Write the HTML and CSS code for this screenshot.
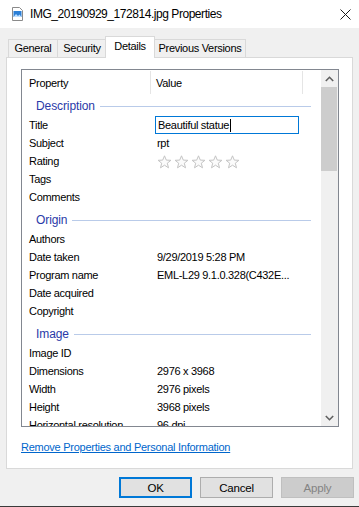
FILE: index.html
```html
<!DOCTYPE html>
<html>
<head>
<meta charset="utf-8">
<link rel="stylesheet" href="styles.css">
</head>
<body>
<div class="window">
  <div class="titlebar">
    <svg class="ficon" width="11" height="14" viewBox="0 0 11 14">
      <path d="M0.5 0.5 H7.5 L10.5 3.5 V13.5 H0.5 Z" fill="#fff" stroke="#8a8a8a"/>
      <rect x="1.5" y="4" width="8" height="6" fill="#2b7fd6"/>
      <path d="M1.5 10 L4 7 L6 9 L7.5 7.5 L9.5 10 Z" fill="#bfe0ff"/>
    </svg>
    <span class="title">IMG_20190929_172814.jpg Properties</span>
    <svg class="close" width="11" height="11" viewBox="0 0 11 11">
      <path d="M0.5 0.5 L10.5 10.5 M10.5 0.5 L0.5 10.5" stroke="#1a1a1a" stroke-width="1"/>
    </svg>
  </div>
  <div class="tabs">
    <div class="tab t-general">General</div>
    <div class="tab t-security">Security</div>
    <div class="tab t-details active">Details</div>
    <div class="tab t-prev">Previous Versions</div>
  </div>
  <div class="panel">
    <div class="list">
      <div class="list-main">
        <div class="header">
          <div class="hcell hprop">Property</div>
          <div class="hcell hval">Value</div>
          <div class="hcell hrest"></div>
        </div>
        <div class="body">
          <div class="group first"><span>Description</span><i></i></div>
          <div class="row"><div class="p">Title</div><div class="v"><div class="edit">Beautiful statue<b class="caret"></b></div></div></div>
          <div class="row"><div class="p">Subject</div><div class="v">rpt</div></div>
          <div class="row"><div class="p">Rating</div><div class="v stars">
            <svg width="15" height="14" viewBox="0 0 15 14"><path class="star" d="M7.5 0.8 L9.3 5.1 L13.9 5.3 L10.3 8.2 L11.5 12.8 L7.5 10.2 L3.5 12.8 L4.7 8.2 L1.1 5.3 L5.7 5.1 Z"/></svg>
            <svg width="15" height="14" viewBox="0 0 15 14"><path class="star" d="M7.5 0.8 L9.3 5.1 L13.9 5.3 L10.3 8.2 L11.5 12.8 L7.5 10.2 L3.5 12.8 L4.7 8.2 L1.1 5.3 L5.7 5.1 Z"/></svg>
            <svg width="15" height="14" viewBox="0 0 15 14"><path class="star" d="M7.5 0.8 L9.3 5.1 L13.9 5.3 L10.3 8.2 L11.5 12.8 L7.5 10.2 L3.5 12.8 L4.7 8.2 L1.1 5.3 L5.7 5.1 Z"/></svg>
            <svg width="15" height="14" viewBox="0 0 15 14"><path class="star" d="M7.5 0.8 L9.3 5.1 L13.9 5.3 L10.3 8.2 L11.5 12.8 L7.5 10.2 L3.5 12.8 L4.7 8.2 L1.1 5.3 L5.7 5.1 Z"/></svg>
            <svg width="15" height="14" viewBox="0 0 15 14"><path class="star" d="M7.5 0.8 L9.3 5.1 L13.9 5.3 L10.3 8.2 L11.5 12.8 L7.5 10.2 L3.5 12.8 L4.7 8.2 L1.1 5.3 L5.7 5.1 Z"/></svg>
          </div></div>
          <div class="row"><div class="p">Tags</div><div class="v"></div></div>
          <div class="row"><div class="p">Comments</div><div class="v"></div></div>
          <div class="group"><span>Origin</span><i></i></div>
          <div class="row"><div class="p">Authors</div><div class="v"></div></div>
          <div class="row"><div class="p">Date taken</div><div class="v">9/29/2019 5:28 PM</div></div>
          <div class="row"><div class="p">Program name</div><div class="v">EML-L29 9.1.0.328(C432E...</div></div>
          <div class="row"><div class="p">Date acquired</div><div class="v"></div></div>
          <div class="row"><div class="p">Copyright</div><div class="v"></div></div>
          <div class="group"><span>Image</span><i></i></div>
          <div class="row"><div class="p">Image ID</div><div class="v"></div></div>
          <div class="row"><div class="p">Dimensions</div><div class="v">2976 x 3968</div></div>
          <div class="row"><div class="p">Width</div><div class="v">2976 pixels</div></div>
          <div class="row"><div class="p">Height</div><div class="v">3968 pixels</div></div>
          <div class="row"><div class="p">Horizontal resolution</div><div class="v">96 dpi</div></div>
        </div>
      </div>
      <div class="scrollbar">
        <div class="sbtn"><svg width="9" height="6" viewBox="0 0 9 6"><path d="M0.8 5 L4.5 1.3 L8.2 5" fill="none" stroke="#606060" stroke-width="1.6"/></svg></div>
        <div class="thumb"></div>
        <div class="track"></div>
        <div class="sbtn"><svg width="9" height="6" viewBox="0 0 9 6"><path d="M0.8 1 L4.5 4.7 L8.2 1" fill="none" stroke="#606060" stroke-width="1.6"/></svg></div>
      </div>
    </div>
    <div class="linkrow"><a class="link">Remove Properties and Personal Information</a></div>
  </div>
  <div class="buttons">
    <div class="btn default">OK</div>
    <div class="btn">Cancel</div>
    <div class="btn disabled">Apply</div>
  </div>
  <div class="edge"></div>
</div>
</body>
</html>
```

FILE: styles.css
```css
* { box-sizing: border-box; }
html, body { margin: 0; padding: 0; }
body {
  width: 359px;
  height: 507px;
  background: #f0f0f0;
  font-family: "Liberation Sans", Arial, sans-serif;
  font-size: 11px;
  letter-spacing: -0.3px;
  color: #000;
  overflow: hidden;
}
.window { display: flex; flex-direction: column; height: 507px; }

.titlebar {
  height: 28px;
  background: #fff;
  display: flex;
  align-items: center;
  padding-left: 12px;
}
.ficon { flex: none; }
.title { margin-left: 7px; font-size: 12px; letter-spacing: -0.45px; flex: 1; }
.close { margin-right: 8px; flex: none; }

.tabs {
  display: flex;
  align-items: flex-end;
  padding: 8px 0 0 8px;
  height: 30px;
  margin-bottom: -1px;
}
.tab {
  height: 19px;
  border: 1px solid #d9d9d9;
  border-right: none;
  background: #f0f0f0;
  display: flex;
  align-items: center;
  justify-content: center;
  padding-bottom: 1px;
}
.t-general { width: 49px; }
.t-security { width: 49px; }
.t-details { width: 48px; }
.t-prev { width: 92px; border-right: 1px solid #d9d9d9; }
.tab.active {
  position: relative;
  z-index: 1;
  height: 22px;
  background: #fff;
  border-right: 1px solid #d9d9d9;
  border-bottom: none;
  margin: 0 -1px 0 -1px;
  width: 50px;
  padding-bottom: 3px;
}

.panel {
  margin: 0 6px;
  height: 412px;
  background: #fff;
  border: 1px solid #d9d9d9;
  padding: 11px 13px 0 14px;
  display: flex;
  flex-direction: column;
}
.list {
  height: 358px;
  border: 1px solid #828790;
  display: flex;
}
.list-main { flex: 1; overflow: hidden; display: flex; flex-direction: column; }
.header { height: 25px; flex: none; display: flex; }
.hcell { display: flex; align-items: center; }
.hprop { width: 129px; padding-left: 7px; border-right: 1px solid #e5e5e5; margin: 1px 0 1px; }
.hval { width: 152px; padding-left: 5px; border-right: 1px solid #e5e5e5; margin: 1px 0 1px; }
.hrest { flex: 1; }

.body { flex: 1; overflow: hidden; }
.group {
  height: 24px;
  padding: 4px 10px 0 14px;
  display: flex;
  align-items: center;
  color: #2a3aa8;
  font-size: 12px;
  letter-spacing: -0.1px;
}
.group.first { height: 21px; padding-top: 1px; }
.group i { flex: 1; height: 1px; background: #b9cbe9; margin-left: 5px; }
.row { height: 18px; display: flex; align-items: center; }
.row .p { width: 129px; padding-left: 7px; white-space: nowrap; overflow: hidden; }
.row .v { flex: 1; padding-left: 6px; white-space: nowrap; display: flex; align-items: center; }
.edit {
  margin-left: -2px;
  width: 144px;
  height: 18px;
  border: 1px solid #0078d7;
  padding-left: 2px;
  display: flex;
  align-items: center;
}
.caret { display: inline-block; width: 1px; height: 13px; background: #000; margin-left: 1px; }
.stars { gap: 2px; padding-top: 1px; }
.star { fill: #fbfbfb; stroke: #c4c4c4; stroke-width: 1; }

.scrollbar {
  width: 17px;
  flex: none;
  background: #f0f0f0;
  display: flex;
  flex-direction: column;
}
.sbtn { height: 17px; flex: none; display: flex; align-items: center; justify-content: center; }
.thumb { height: 84px; flex: none; background: #cdcdcd; margin: 0 1px 0 0; }
.track { flex: 1; }

.linkrow { height: 41px; display: flex; align-items: center; padding-bottom: 1px; }
.link { color: #0066cc; text-decoration: underline; font-size: 11px; letter-spacing: -0.26px; }

.buttons {
  margin-top: 8px;
  height: 21px;
  display: flex;
  justify-content: flex-end;
  gap: 8px;
  padding-right: 5px;
}
.btn {
  width: 73px;
  height: 21px;
  background: #e1e1e1;
  border: 1px solid #adadad;
  display: flex;
  align-items: center;
  justify-content: center;
  font-size: 11.5px;
  letter-spacing: -0.2px;
}
.btn.default { border: 2px solid #0078d7; }
.btn.disabled { background: #cccccc; border-color: #bfbfbf; color: #838383; }
.edge { margin-top: 8px; height: 1px; background: #3a3a3a; }
```
